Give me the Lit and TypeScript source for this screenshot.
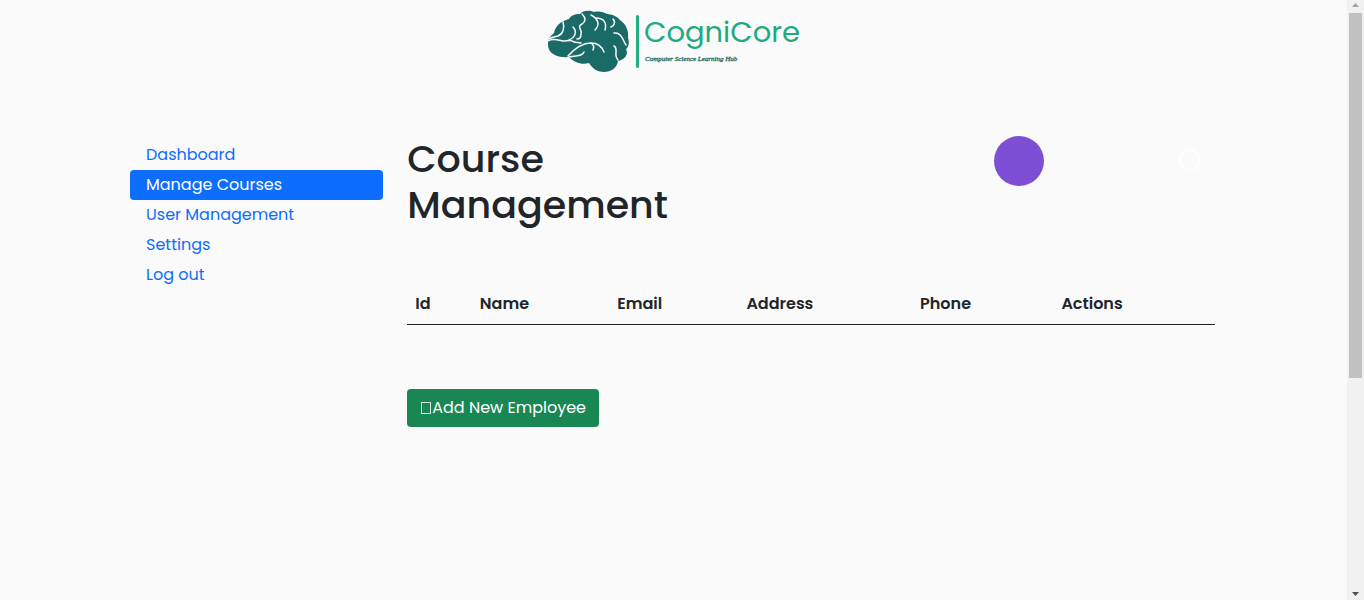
import { LitElement, html, css } from "lit";
import { customElement, state } from "lit/decorators.js";
import { classMap } from "lit/directives/class-map.js";

@customElement("brand-logo")
class BrandLogo extends LitElement {
  static styles = css`
    :host { display: flex; gap: 5px; align-items: flex-start; }
    .brain { display: block; width: 84px; height: 64px; }
    .bar { width: 3px; height: 53px; margin-top: 5px; border-radius: 2px; background: #25ad82; }
    .words { display: flex; flex-direction: column; }
    .name { font-size: 29px; line-height: 44px; color: #1fab80; white-space: nowrap; }
    .tag { font: italic 7px/10px "Liberation Serif", serif; color: #1a6b68; white-space: nowrap; padding-left: 1px; -webkit-text-stroke: 0.3px #1a6b68; }
  `;
  render() {
    return html`
      <svg class="brain" viewBox="0 0 84 64" aria-hidden="true">
        <path fill="#1a6b68" d="M1 32C1 28 5 25 7 23C8 17 13 11 22 9C25 4 30 4 33 4C36 0 43 0 47 2C52 1 57 2 60 4C65 4 71 7 73 10C79 14 82 21 81 28C83 33 81 38 79 39C82 45 77 50 71 51C70 58 64 62 57 62C50 62 45 58 42 53C36 55 27 53 22 47C11 48 1 44 1 35Z"/>
        <g fill="none" stroke="#fafafa" stroke-width="1.5" stroke-linecap="round">
          <path d="M16 12C18 18 16 24 11 26C7 27 4 27 2 29"/>
          <path d="M1 31C5 28 11 30 16 31C20 31 24 29 27 32L34 33"/>
          <path d="M26 17C30 21 29 27 22 30"/>
          <path d="M35 4C39 8 39 11 35 14C29 17 36 20 34 24C34 27 33 29 30 29"/>
          <path d="M44 5C50 8 54 14 48 20M49 8C57 8 60 13 58 20"/>
          <path d="M66 9C69 12 67 16 64 17"/>
          <path d="M67 23C75 22 76 31 79 35"/>
          <path d="M67 36C72 39 66 45 71 50"/>
          <path d="M21 46C29 37 37 33 44 33C51 33 55 37 57 42M44 33C47 35 47 38 46 40"/>
          <path d="M22 47C29 45 35 47 37 42"/>
        </g>
      </svg>
      <div class="bar"></div>
      <div class="words">
        <span class="name">CogniCore</span>
        <span class="tag">Computer Science Learning Hub</span>
      </div>
    `;
  }
}

@customElement("app-root")
class AppRoot extends LitElement {
  @state() active = "Manage Courses";

  links = ["Dashboard", "Manage Courses", "User Management", "Settings", "Log out"];
  columns = ["Id", "Name", "Email", "Address", "Phone", "Actions"];

  static styles = css`
    :host {
      display: flex; height: 100vh; overflow: hidden; background: #fafafa; color: #212529;
      font: 16px/24px Poppins, Inter, sans-serif;
    }
    * { box-sizing: border-box; }
    .page { flex: 1; min-width: 0; padding-right: 2px; }
    header { display: flex; justify-content: center; padding: 10px 0 0 2px; height: 136px; }
    .layout { display: grid; grid-template-columns: 1fr 3fr; max-width: 1109px; margin: 0 auto; }
    nav { display: flex; flex-direction: column; padding: 4px 12px; }
    nav a { padding: 3px 16px; border-radius: 4px; color: #0d6efd; text-decoration: none; }
    nav a.active { background: #0d6efd; color: #fff; }
    main { padding: 0 12px; }
    .top { display: grid; grid-template-columns: 587px 1fr; align-items: start; }
    h1 { margin: 0; width: 300px; font-size: 38px; line-height: 46px; font-weight: 500; }
    .tools { display: flex; justify-content: space-between; padding-right: 12px; }
    button { font: inherit; border: 0; cursor: pointer; }
    .round { width: 50px; height: 50px; border-radius: 50%; background: #7e4fd4; }
    .search { background: none; padding: 0; height: 50px; }
    .search svg { display: block; width: 24px; height: 24px; }
    table { width: 100%; margin-top: 55px; border-collapse: collapse; table-layout: fixed; }
    th { padding: 8px; text-align: left; font-weight: 600; line-height: 25px; border-bottom: 1px solid #212529; }
    .c0 { width: 8%; } .c1 { width: 17%; } .c2 { width: 16%; }
    .c3 { width: 21.5%; } .c4 { width: 17.5%; } .c5 { width: 20%; }
    .add { display: flex; align-items: center; gap: 1px; height: 38px; margin-top: 64px; padding: 0 13px 0 14px; border-radius: 4px; background: #198754; color: #fff; white-space: nowrap; }
    .box { width: 10px; height: 12px; border: 1px solid #d5e8df; }
    .scroll { display: flex; flex-direction: column; align-items: center; width: 17px; background: #f1f1f1; }
    .scroll svg { display: block; width: 17px; height: 13px; flex: none; }
    .track { flex: 1; width: 13px; }
    .thumb { height: 63.6%; background: #c1c1c1; }
  `;

  pick(event: Event, link: string) {
    event.preventDefault();
    this.active = link;
  }

  render() {
    return html`
      <div class="page">
        <header><brand-logo></brand-logo></header>
        <div class="layout">
          <nav aria-label="Main">
            ${this.links.map((link) => html`<a href="#" class=${classMap({ active: link === this.active })}
              @click=${(e: Event) => this.pick(e, link)}>${link}</a>`)}
          </nav>
          <main>
            <div class="top">
              <h1>Course Management</h1>
              <div class="tools">
                <button class="round" aria-label="Menu"></button>
                <button class="search" aria-label="Search">
                  <svg viewBox="0 0 24 24" fill="none" stroke="#fff" stroke-width="1.5">
                    <circle cx="11" cy="11" r="10"/><path d="M20 19l3 3"/>
                  </svg>
                </button>
              </div>
            </div>
            <table>
              <thead><tr>${this.columns.map((name, i) => html`<th scope="col" class="c${i}">${name}</th>`)}</tr></thead>
              <tbody></tbody>
            </table>
            <button class="add"><span class="box"></span>Add New Employee</button>
          </main>
        </div>
      </div>
      <div class="scroll" aria-hidden="true">
        <svg viewBox="0 0 17 13"><path fill="#a3a3a3" d="M8.500 3L12 7H5z"/></svg>
        <div class="track"><div class="thumb"></div></div>
        <svg viewBox="0 0 17 13"><path fill="#505050" d="M5 5h7L8.500 9z"/></svg>
      </div>
    `;
  }
}
